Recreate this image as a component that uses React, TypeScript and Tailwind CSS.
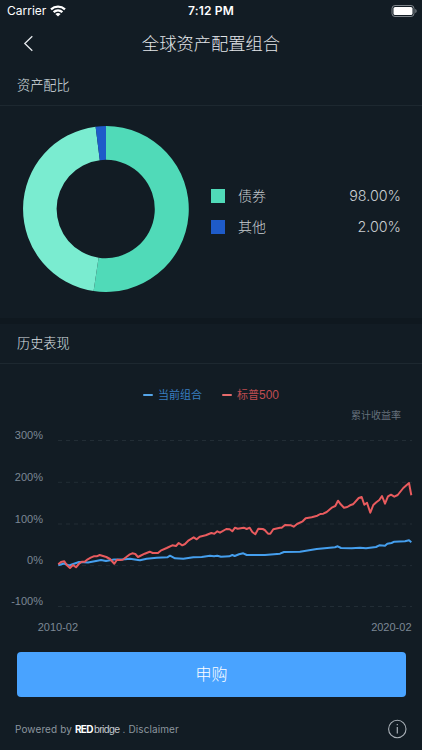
import { ReactNode } from 'react';

const allocation = [
  { name: '债券', value: '98.00%', color: 'bg-[#50dab8]' },
  { name: '其他', value: '2.00%', color: 'bg-[#1e5bc9]' },
];

const gridLines = [
  { label: '300%', y: 15.5 },
  { label: '200%', y: 57.3 },
  { label: '100%', y: 99 },
  { label: '0%', y: 140.6 },
  { label: '-100%', y: 181.5 },
];

// chart lines, y is measured from the 425px baseline of the plot group
const sp500 =
  '58.3,564.3 61,562 64.3,561.3 66.7,565 70,568 73,565 76,567.3 78.7,564 81.7,561.7 84.7,561.7 87.7,559.3 90.7,557.7 93.7,556.3 96.7,556.3 99.7,555 103,556 106.3,557 110,559 114.3,563.7 117,559.7 120,560 122.7,559.7 126,557.3 129.3,554.7 132.3,553.3 135.3,554 138,557 140,556 144.7,553.7 149.7,551.7 152.7,553 158,553 160.7,550.7 166.7,548 172.3,545.3 176,546 178.7,543 182.3,545.3 185,544 188.7,540.3 193.7,537.3 196.7,539.3 199.7,536.7 205.7,535.3 211.3,533 214.3,533.7 217.3,531.3 220,532.7 226.3,529 229.7,529.3 232.3,531.3 235,527.7 237.7,528.7 243.7,527.7 246.7,529 249.7,527.7 252.3,532 255.3,534.3 258.3,528.7 262.7,529 264.7,530 268,533.7 270.3,533.7 273.3,529.3 280,527.7 281.7,527.7 285,525 291,525.3 293.7,526.7 297,524 302.7,521.3 305.7,518.3 311.7,517.3 317.3,515.7 320.3,514 323.3,513.7 326.7,512 332.3,507.3 335.3,506 338,500.7 340.7,504.3 344,507.7 347.3,507 350,505.3 353,504.3 358.7,498 361.7,497 364.3,504.7 367,502.7 370.3,512.7 373.3,505 376.3,502.3 379.3,500 382,496 385,503.7 388,496.3 391,494.7 394.3,496.7 397.7,495 403.3,488 409,483 411.3,495.3';
const portfolio =
  '58.3,565.3 64,563.5 69,565.5 79,562 88,562.5 96,561 101,560 106,561 114,559.5 125,559.3 130,558.7 138,560 140,560.3 146.7,558.7 156.7,557.7 167.3,557.3 170,555.7 175,558.3 183.3,558.7 193.3,557.3 201.7,557 210,555.7 214,556.3 217.3,555.7 221,556.7 229.3,556.3 232.3,555 234.7,556 239,554.3 243.3,553.3 246.7,555 265,555 280,553.7 284,552 300,551.7 316.7,549 335,547.3 337.7,546.3 341,548 351.7,548.3 360,547.7 366,548.3 376,547 379.3,545.3 385,545.7 387.3,543.7 391.5,543 394.3,541.7 405,541.3 409,540.3 411.3,542.3';

function StatusBar() {
  return (
    <div className="grid h-[22px] grid-cols-3 items-center pl-[7px] pr-[5px] font-['Inter','Liberation_Sans',sans-serif] text-white">
      <div className="flex items-center gap-1">
        <span className="text-xs">Carrier</span>
        <svg width="16" height="12" viewBox="0 0 16 12" fill="none" stroke="currentColor" strokeWidth="2.3">
          <path d="M1 4.4C5 .7 11 .7 15 4.4" />
          <path d="M3.6 7.2C6.2 4.9 9.8 4.9 12.4 7.2" />
          <path d="M8 11.6 5.4 9C6.9 7.7 9.1 7.7 10.6 9Z" fill="currentColor" stroke="none" />
        </svg>
      </div>
      <span className="pr-0.5 text-center text-xs font-semibold tracking-[0.2px]">7:12 PM</span>
      <svg className="justify-self-end" width="26" height="12" viewBox="0 0 26 12">
        <rect x="1" y=".5" width="22" height="11" rx="3" fill="none" stroke="#7e858b" />
        <rect x="2.5" y="2" width="19" height="8" rx="1.6" fill="#fff" />
        <path d="M24.3 4v4c.9-.3 1.3-1.1 1.3-2s-.4-1.7-1.3-2z" fill="#7e858b" />
      </svg>
    </div>
  );
}

function SectionTitle({ children }: { children: ReactNode }) {
  return (
    <h2 className="flex h-10 items-center border-b border-[#1d2830] pl-[17px] text-[13.2px] font-light text-[#dde1e4]">
      {children}
    </h2>
  );
}

function Donut() {
  return (
    <svg className="ml-[23px] shrink-0" width="166" height="166" viewBox="-83 -83 166 166">
      <path d="M0-83A83 83 0 1 1-12.4 82.1L-7.4 48.7A49.2 49.2 0 1 0 0-49.2Z" fill="#50dab8" />
      <path d="M-12.4 82.1A83 83 0 0 1-10.4-82.3L-6.2-48.8A49.2 49.2 0 0 0-7.4 48.7Z" fill="#7aecd0" />
      <path d="M-10.4-82.3A83 83 0 0 1 0-83V-49.2A49.2 49.2 0 0 0-6.2-48.8Z" fill="#1e5bc9" />
    </svg>
  );
}

function Chart() {
  return (
    <svg className="block" width="422" height="215" viewBox="0 0 422 215" fontFamily="Liberation Sans, Arial, sans-serif" fontSize="11" fill="#7c8895">
      {gridLines.map((line) => (
        <g key={line.label}>
          <text x="43" y={line.y - 1.3} textAnchor="end">{line.label}</text>
          <line x1="58" x2="412" y1={line.y} y2={line.y} stroke="#222d35" strokeDasharray="4 4" />
        </g>
      ))}
      <g transform="translate(0 -425)" fill="none" strokeWidth="2" strokeLinejoin="round">
        <polyline points={portfolio} stroke="#459fee" />
        <polyline points={sp500} stroke="#e95b5e" />
      </g>
      <text x="37.7" y="205.5">2010-02</text>
      <text x="411.5" y="205.5" textAnchor="end">2020-02</text>
    </svg>
  );
}

function Logo() {
  return (
    <span className="ml-[3px] mr-[3px] flex items-center leading-[14px]">
      <span className="text-[10px] font-bold tracking-[-0.6px] text-white">RED</span>
      <span className="ml-px text-[10.5px] tracking-[-0.6px] text-[#c3c9ce] font-['Liberation_Sans',sans-serif]">bridge</span>
    </span>
  );
}

export default function App() {
  return (
    <div className="flex h-[750px] w-[422px] flex-col overflow-hidden bg-[#121c24] font-['Liberation_Sans','Noto_Sans_CJK_SC',sans-serif]">
      <StatusBar />
      <header className="grid h-11 grid-cols-[58px_1fr_58px] items-center">
        <svg className="mb-px ml-[23px]" width="11" height="17" viewBox="0 0 11 17" fill="none" stroke="#e6eaed" strokeWidth="1.3">
          <path d="M9.3 1.2 1.8 8.5l7.5 7.3" />
        </svg>
        <h1 className="pt-px text-center text-[17.3px] font-light leading-none text-[#e3e6e9]">全球资产配置组合</h1>
      </header>

      <section className="h-[252px]">
        <SectionTitle>资产配比</SectionTitle>
        <div className="mt-5 flex items-center">
          <Donut />
          <ul className="ml-[22px] mr-[21px] mt-[5px] flex grow flex-col gap-[7px]">
            {allocation.map((item) => (
              <li key={item.name} className="flex h-6 items-center text-[14px] text-[#c9ced2]">
                <span className={`mr-[13px] h-3.5 w-3.5 ${item.color}`}></span>
                <span className="font-light">{item.name}</span>
                <span className="ml-auto font-['Inter','Liberation_Sans',sans-serif] text-[14.3px] font-light">{item.value}</span>
              </li>
            ))}
          </ul>
        </div>
      </section>

      <div className="h-1.5 bg-[#0f181f]"></div>

      <section>
        <SectionTitle>历史表现</SectionTitle>
        <div className="mt-[22px] flex h-[18px] items-center justify-center text-[11px]">
          <span className="mr-[5px] h-0.5 w-2.5 rounded-full bg-[#55a5e8]"></span>
          <span className="text-[#397fc0]">当前组合</span>
          <span className="ml-5 mr-[5px] h-0.5 w-2.5 rounded-full bg-[#e66b6c]"></span>
          <span className="text-[#bf4c51]">标普<span className="text-xs">500</span></span>
        </div>
        <div className="mr-[21px] mt-[3px] h-[18px] text-right text-[10px] leading-[18px] text-[#66717c]">累计收益率</div>
        <Chart />
      </section>

      <button className="ml-[17px] mr-4 mt-3 h-[45px] shrink-0 rounded bg-[#49a3ff] text-[16px] font-light text-white">申购</button>

      <footer className="flex grow items-center justify-between pl-[15px] pr-[15px] pt-[11px] text-[#8c969f]">
        <div className="flex items-center font-['Inter','Liberation_Sans',sans-serif] text-[10px] tracking-[0.1px]">
          <span>Powered by</span>
          <Logo />
          <span>. Disclaimer</span>
        </div>
        <svg width="20" height="20" viewBox="0 0 20 20" fill="none" stroke="#a9b0b7">
          <circle cx="10.3" cy="10" r="8.7" strokeWidth="1.1" />
          <path d="M10.3 8v6.5M10.3 4.9v1.4" strokeWidth="1.2" />
        </svg>
      </footer>
    </div>
  );
}
